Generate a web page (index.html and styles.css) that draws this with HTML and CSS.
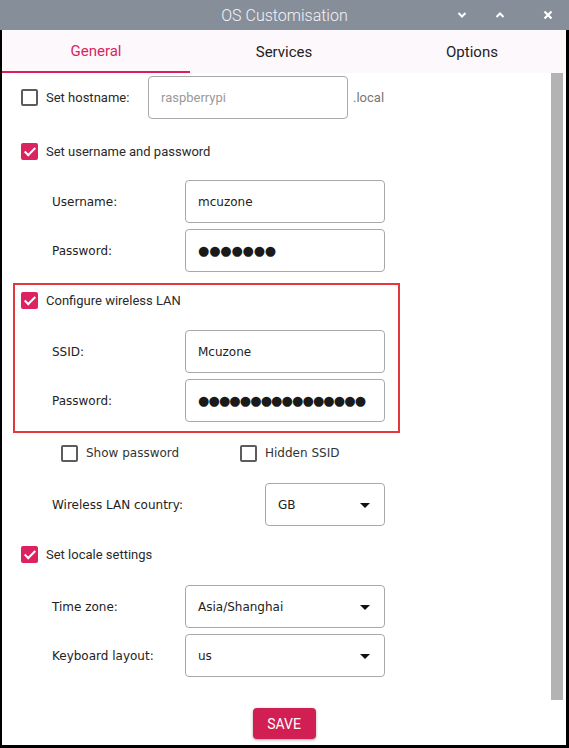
FILE: index.html
```html
<!DOCTYPE html>
<html>
<head>
<meta charset="UTF-8">
<link rel="stylesheet" href="styles.css">
<title>OS Customisation</title>
</head>
<body>
<div class="window">
  <div class="titlebar">
    <span class="title">OS Customisation</span>
    <div class="winbtns">
      <svg class="min" width="10" height="8" viewBox="0 0 10 8"><path d="M1.5 2 L5 5.5 L8.5 2" fill="none" stroke="#fff" stroke-width="2"/></svg>
      <svg class="max" width="10" height="8" viewBox="0 0 10 8"><path d="M1.5 6 L5 2.5 L8.5 6" fill="none" stroke="#fff" stroke-width="2"/></svg>
      <svg width="10" height="10" viewBox="0 0 10 10"><path d="M1.5 1.5 L8.5 8.5 M8.5 1.5 L1.5 8.5" fill="none" stroke="#fff" stroke-width="2.2"/></svg>
    </div>
  </div>

  <div class="tabs">
    <div class="tab active">General</div>
    <div class="tab">Services</div>
    <div class="tab">Options</div>
  </div>

  <div class="body">
    <div class="main">
      <div class="hostrow">
        <span class="cb"></span>
        <span class="cblabel hostlabel">Set hostname:</span>
        <div class="input host"><span class="ph">raspberrypi</span></div>
        <span class="suffix">.local</span>
      </div>

      <div class="checkrow user"><span class="cb on"></span><span class="cblabel">Set username and password</span></div>
      <div class="field first"><span class="flabel">Username:</span><div class="input"><span>mcuzone</span></div></div>
      <div class="field"><span class="flabel">Password:</span><div class="input"><span class="dots">●●●●●●●</span></div></div>

      <div class="wlan">
        <div class="checkrow"><span class="cb on"></span><span class="cblabel">Configure wireless LAN</span></div>
        <div class="field ssid"><span class="flabel">SSID:</span><div class="input"><span>Mcuzone</span></div></div>
        <div class="field"><span class="flabel">Password:</span><div class="input"><span class="dots tight">●●●●●●●●●●●●●●●●</span></div></div>
      </div>

      <div class="opts">
        <div class="opt"><span class="cb"></span><span class="optlabel">Show password</span></div>
        <div class="opt"><span class="cb"></span><span class="optlabel">Hidden SSID</span></div>
      </div>

      <div class="field country"><span class="flabel wide">Wireless LAN country:</span><div class="input combo small"><span>GB</span><i class="arrow"></i></div></div>

      <div class="checkrow locale"><span class="cb on"></span><span class="cblabel">Set locale settings</span></div>
      <div class="field tz"><span class="flabel">Time zone:</span><div class="input combo"><span>Asia/Shanghai</span><i class="arrow"></i></div></div>
      <div class="field"><span class="flabel">Keyboard layout:</span><div class="input combo"><span>us</span><i class="arrow"></i></div></div>
    </div>
    <div class="scroll"></div>
  </div>

  <div class="footer">
    <button class="save">SAVE</button>
  </div>
</div>
</body>
</html>
```

FILE: styles.css
```css
body
{
  margin: 0;
  background: #fff;
}
.window
{
  width: 569px;
  height: 748px;
  box-sizing: border-box;
  border-left: 2px solid #000;
  border-right: 3px solid #000;
  border-bottom: 3px solid #000;
  display: flex;
  flex-direction: column;
  font-family: Roboto, "Liberation Sans", sans-serif;
}
.titlebar
{
  height: 30px;
  margin: 0 -3px 0 -2px;
  background: #858e99;
  position: relative;
  display: flex;
  align-items: center;
  justify-content: center;
}
.title
{
  color: #f4f4f8;
  font-size: 16px;
  font-weight: 300;
}
.winbtns
{
  position: absolute;
  right: 16px;
  top: 10px;
  display: flex;
  align-items: center;
}
.winbtns svg
{
  display: block;
}
.winbtns .min
{
  margin-right: 28px;
}
.winbtns .max
{
  margin-right: 38px;
}
.tabs
{
  height: 43px;
  display: flex;
  background: #fdf8fc;
}
.tab
{
  flex: 1;
  display: flex;
  align-items: center;
  justify-content: center;
  font-size: 15px;
  color: #222;
  padding-top: 1px;
  box-sizing: border-box;
}
.tab.active
{
  color: #d9245f;
  border-bottom: 2px solid #e01b5c;
}
.body
{
  flex: 1;
  display: flex;
  min-height: 0;
}
.main
{
  flex: 1;
  padding-left: 19px;
}
.scroll
{
  width: 12px;
  background: #b3b3b3;
  margin-right: 3px;
}
.footer
{
  height: 45px;
  display: flex;
  justify-content: center;
  padding-top: 8px;
  box-sizing: border-box;
}
.save
{
  width: 63px;
  height: 31px;
  border: none;
  border-radius: 4px;
  background: #d11f54;
  color: #fff;
  font-family: Roboto, sans-serif;
  font-size: 14px;
  box-shadow: 0 1px 3px rgba(0,0,0,0.35);
  padding: 0;
}

/* checkboxes */
.cb
{
  width: 17px;
  height: 17px;
  box-sizing: border-box;
  border: 2px solid #5c5c5c;
  border-radius: 2px;
  flex: none;
  position: relative;
}
.cb.on
{
  border: none;
  background: #dc2360;
}
.cb.on::after
{
  content: "";
  position: absolute;
  left: 6px;
  top: 2px;
  width: 4px;
  height: 9px;
  border: solid #fff;
  border-width: 0 2px 2px 0;
  transform: rotate(45deg);
}
.cblabel
{
  margin-left: 8px;
  font-size: 13px;
  color: #2a2a2a;
}
.checkrow
{
  height: 30px;
  display: flex;
  align-items: center;
}
.checkrow.user
{
  margin-top: 17px;
}
.checkrow.locale
{
  margin-top: 13px;
}

/* hostname */
.hostrow
{
  margin-top: 3px;
  height: 43px;
  display: flex;
  align-items: center;
}
.hostlabel
{
  width: 102px;
}
.input.host
{
  width: 200px;
  font-family: Roboto, sans-serif;
  font-size: 13px;
}
.ph
{
  color: #9a9a9a;
}
.suffix
{
  margin-left: 5px;
  font-size: 13px;
  color: #777;
}

/* fields */
.field
{
  display: flex;
  align-items: center;
  padding-left: 31px;
  margin-top: 6px;
}
.field.first
{
  margin-top: 14px;
}
.field.ssid
{
  margin-top: 15px;
}
.field.country
{
  margin-top: 18px;
}
.field.tz
{
  margin-top: 16px;
}
.flabel
{
  width: 133px;
  font-family: "DejaVu Sans", sans-serif;
  font-size: 12px;
  color: #222;
}
.flabel.wide
{
  width: 213px;
}
.input
{
  width: 200px;
  height: 43px;
  box-sizing: border-box;
  border: 1px solid #a8a8a8;
  border-radius: 4px;
  background: #fff;
  display: flex;
  align-items: center;
  padding-left: 12px;
  font-family: "DejaVu Sans", sans-serif;
  font-size: 12px;
  color: #222;
  position: relative;
}
.input.small
{
  width: 120px;
}
.dots
{
  font-size: 13px;
  color: #1a1a1a;
  letter-spacing: -0.2px;
}
.dots.tight
{
  letter-spacing: -0.9px;
}
.arrow
{
  position: absolute;
  right: 14px;
  top: 19px;
  width: 0;
  height: 0;
  border-left: 5px solid transparent;
  border-right: 5px solid transparent;
  border-top: 5px solid #111;
}

/* wireless box */
.wlan
{
  margin-top: 11px;
  margin-left: -8px;
  width: 387px;
  box-sizing: border-box;
  border: 2px solid #e4363d;
  padding: 0 0 9px 6px;
}
.opts
{
  margin-top: 8px;
  height: 24px;
  display: flex;
  align-items: center;
  padding-left: 40px;
}
.opt
{
  display: flex;
  align-items: center;
  width: 179px;
}
.optlabel
{
  margin-left: 8px;
  font-family: "DejaVu Sans", sans-serif;
  font-size: 12px;
  color: #333;
}
```
